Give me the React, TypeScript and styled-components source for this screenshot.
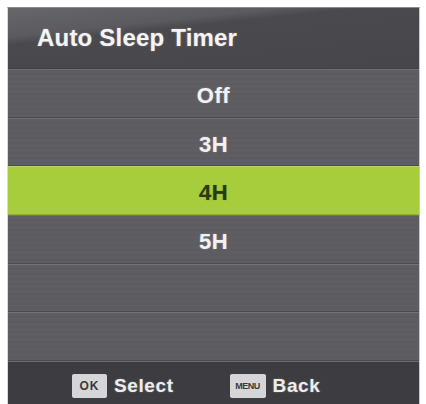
import React from 'react';
import styled, { createGlobalStyle } from 'styled-components';

const GlobalStyle = createGlobalStyle`
  html, body {
    margin: 0;
    padding: 0;
    background: #ffffff;
  }
  body {
    font-family: 'Liberation Sans', Arial, sans-serif;
  }
`;

interface Option {
  label: string;
  value: number | null;
}

const options: Option[] = [
  { label: 'Off', value: 0 },
  { label: '3H', value: 3 },
  { label: '4H', value: 4 },
  { label: '5H', value: 5 },
  { label: '', value: null },
  { label: '', value: null },
];

const selectedValue = 4;

const Screen = styled.div`
  width: 426px;
  height: 404px;
  padding: 7px 6px 0 7px;
  box-sizing: border-box;
  overflow: hidden;
`;

const Panel = styled.section`
  height: 100%;
  display: flex;
  flex-direction: column;
  background: #5d5d61;
  border-left: 1px solid #d9d9dc;
  border-right: 1px solid #c9c9cc;
  border-top: 1px solid #8a8a8e;
  box-sizing: border-box;
`;

const Header = styled.header`
  height: 60px;
  display: flex;
  align-items: center;
  padding-left: 29px;
  background: linear-gradient(
    174deg,
    #67676b 0%,
    #5b5b5f 28%,
    #4a4a4e 36%,
    #47474b 100%
  );
  border-bottom: 1px solid #3f3f43;
`;

const Title = styled.h1`
  margin: 0;
  font-size: 24px;
  font-weight: 700;
  color: #f4f4f4;
  letter-spacing: 0.2px;
  text-shadow: 0 0 2px rgba(255, 255, 255, 0.35);
`;

const List = styled.ul`
  flex: 1;
  margin: 0;
  padding: 0;
  list-style: none;
  display: flex;
  flex-direction: column;
`;

const Row = styled.li<{ $active: boolean }>`
  flex: 1;
  display: flex;
  align-items: center;
  justify-content: center;
  padding-top: 5px;
  font-size: 22px;
  font-weight: 700;
  letter-spacing: 0.5px;
  color: ${({ $active }) => ($active ? '#2a3b10' : '#f2f2f2')};
  background: ${({ $active }) =>
    $active
      ? '#a7cd3d'
      : 'repeating-linear-gradient(180deg, #5e5e62 0px, #5e5e62 3px, #5c5c60 3px, #5c5c60 5px)'};
  border-top: 1px solid ${({ $active }) => ($active ? '#b6d565' : '#707074')};
  border-bottom: 1px solid ${({ $active }) => ($active ? '#8faf35' : '#4b4b4f')};
  text-shadow: ${({ $active }) =>
    $active ? '0 0 1px rgba(42, 59, 16, 0.5)' : '0 0 2px rgba(255, 255, 255, 0.3)'};
`;

const Footer = styled.footer`
  height: 43px;
  display: flex;
  align-items: center;
  padding: 5px 0 0 64px;
  box-sizing: border-box;
  background: #3d3d41;
  border-top: 1px solid #6e6e72;
`;

const Hint = styled.div`
  display: flex;
  align-items: center;
  gap: 7px;
  margin-right: 56px;
`;

const Key = styled.span<{ $wide?: boolean }>`
  width: ${({ $wide }) => ($wide ? '36px' : '35px')};
  height: 24px;
  display: flex;
  align-items: center;
  justify-content: center;
  background: #d6d6d8;
  border-radius: 2px;
  color: #3a3a3e;
  font-size: ${({ $wide }) => ($wide ? '9px' : '12px')};
  font-weight: 700;
  letter-spacing: ${({ $wide }) => ($wide ? '-0.5px' : '1px')};
`;

const HintLabel = styled.span`
  font-size: 19px;
  font-weight: 700;
  color: #ededed;
  letter-spacing: 0.6px;
  text-shadow: 0 0 2px rgba(255, 255, 255, 0.3);
`;

const App: React.FC = () => (
  <>
    <GlobalStyle />
    <Screen>
      <Panel>
        <Header>
          <Title>Auto Sleep Timer</Title>
        </Header>
        <List>
          {options.map((option, i) => (
            <Row key={i} $active={option.value === selectedValue}>
              {option.label}
            </Row>
          ))}
        </List>
        <Footer>
          <Hint>
            <Key>OK</Key>
            <HintLabel>Select</HintLabel>
          </Hint>
          <Hint>
            <Key $wide>MENU</Key>
            <HintLabel>Back</HintLabel>
          </Hint>
        </Footer>
      </Panel>
    </Screen>
  </>
);

export default App;
